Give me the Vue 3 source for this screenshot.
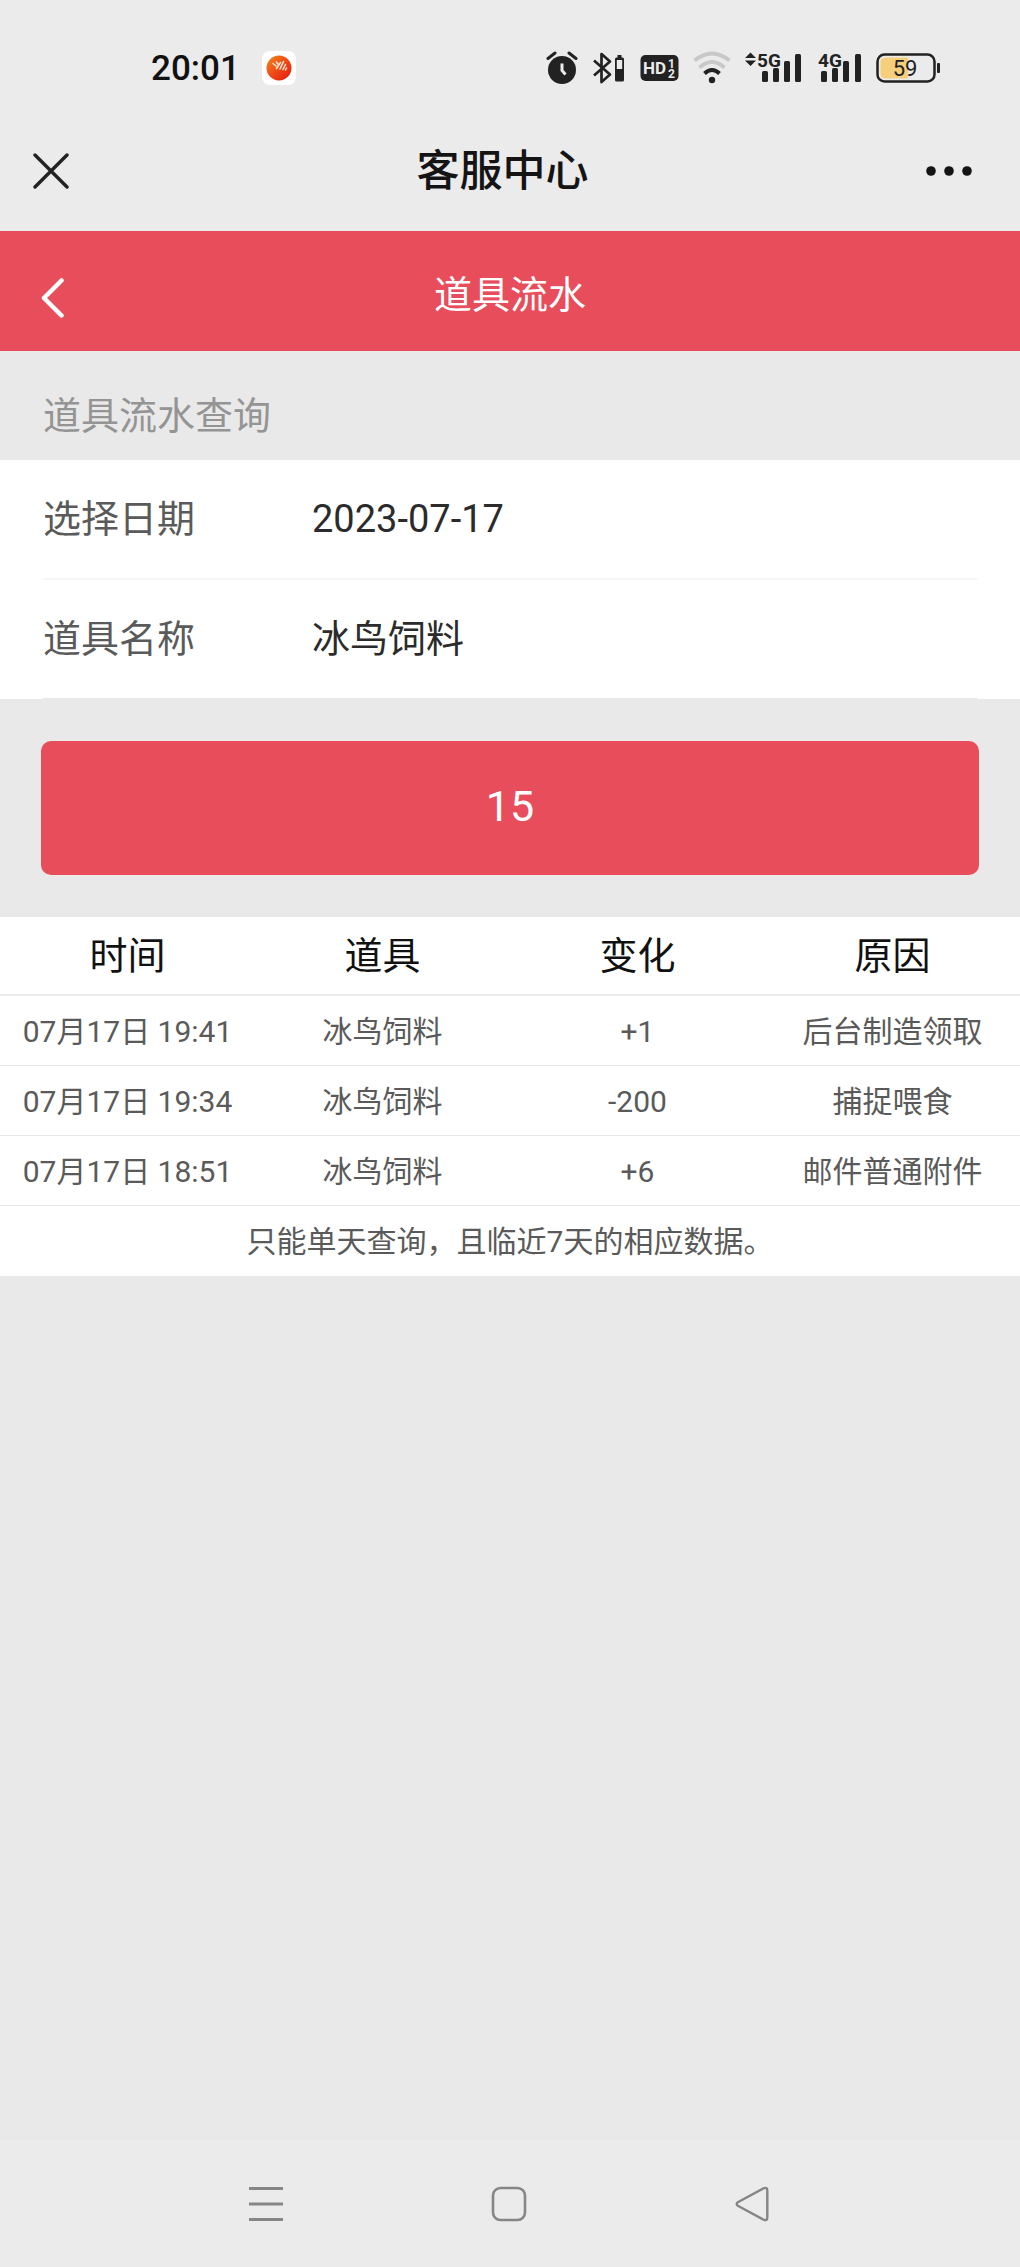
<script setup>
import { ref } from 'vue'

const date = ref('2023-07-17')
const item = ref('冰鸟饲料')
const columns = ['时间', '道具', '变化', '原因']
const records = [
  { time: '07月17日 19:41', item: '冰鸟饲料', change: '+1', reason: '后台制造领取' },
  { time: '07月17日 19:34', item: '冰鸟饲料', change: '-200', reason: '捕捉喂食' },
  { time: '07月17日 18:51', item: '冰鸟饲料', change: '+6', reason: '邮件普通附件' },
]
</script>

<template>
  <div class="screen">
    <header class="status">
      <div class="status-left">
        <time class="clock">20:01</time>
        <svg class="app" width="34" height="34" viewBox="0 0 34 34" aria-hidden="true">
          <defs>
            <linearGradient id="ball" x1="0" y1="0" x2="1" y2="1">
              <stop offset="0" stop-color="#f08a1c" />
              <stop offset="0.5" stop-color="#ee4a14" />
              <stop offset="1" stop-color="#e8140e" />
            </linearGradient>
          </defs>
          <rect width="34" height="34" rx="8" fill="#fff" />
          <circle cx="17" cy="17" r="12.500" fill="url(#ball)" />
          <path d="M11 12.500l3 2.500M14.500 11l2 3M14.500 17.500l4-6M18 18l3.500-7.500M21 18.500l2.500-5M23.500 19l1-2" stroke="#fbe3cf" stroke-width="1.600" stroke-linecap="round" fill="none" />
        </svg>
      </div>
      <div class="status-right">
        <svg width="32" height="34" viewBox="0 0 32 34" aria-hidden="true">
          <circle cx="16" cy="19" r="14" fill="#222" />
          <path d="M2 7.500l7-5.500M30 7.500L23 2" stroke="#222" stroke-width="3" stroke-linecap="round" />
          <path d="M16 12.500v7l3.500 4" stroke="#ebebeb" stroke-width="3" fill="none" />
        </svg>
        <svg class="bt" width="34" height="34" viewBox="0 0 34 34" aria-hidden="true">
          <path d="M2 9.500l16 14-8.500 7.500V3L18 10.500 2 24.500" stroke="#222" stroke-width="2.700" fill="none" stroke-linejoin="round" />
          <rect x="23" y="6.500" width="9" height="24" rx="1.500" fill="#222" />
          <rect x="25.500" y="4" width="4" height="3" fill="#222" />
          <rect x="24.800" y="9" width="5.400" height="9" fill="#ebebeb" />
        </svg>
        <svg class="hd" width="39" height="28" viewBox="0 0 39 28" aria-hidden="true">
          <rect x="0.500" y="1" width="38" height="26" rx="5" fill="#222" />
          <text x="3" y="20" class="glyph" font-size="17" fill="#ebebeb">HD</text>
          <text x="28" y="14" class="glyph" font-size="12" fill="#ebebeb">1</text>
          <text x="28" y="24" class="glyph" font-size="12" fill="#ebebeb">2</text>
        </svg>
        <svg class="wifi" width="38" height="34" viewBox="1 0 38 34" fill="none" aria-hidden="true">
          <path d="M2.500 9.500Q20-4.500 37.500 9.500" stroke="#c8c8c8" stroke-width="4" />
          <path d="M7.500 16.500Q20 5.500 32.500 16.500" stroke="#c8c8c8" stroke-width="4" />
          <path d="M12.500 22.500Q20 15.500 27.500 22.500" stroke="#222" stroke-width="4" />
          <circle cx="20" cy="29" r="3.200" fill="#222" />
        </svg>
        <svg class="sig5" width="58" height="50" viewBox="0 -8 58 50" fill="#222" aria-hidden="true">
          <path d="M5.500 1.500l5.500 5.500H0zM5.500 15L0 9.500h11z" />
          <text x="12" y="16" class="glyph" font-size="19">5G</text>
          <rect x="17" y="20" width="6" height="11" rx="1.500" />
          <rect x="28" y="17" width="6" height="14" rx="1.500" />
          <rect x="39" y="10" width="6" height="21" rx="1.500" />
          <rect x="50" y="3" width="6" height="28" rx="1.500" />
        </svg>
        <svg class="sig4" width="45" height="50" viewBox="0 -8 45 50" fill="#222" aria-hidden="true">
          <text x="1" y="16" class="glyph" font-size="19">4G</text>
          <rect x="4" y="20" width="6" height="11" rx="1.500" />
          <rect x="15" y="17" width="6" height="14" rx="1.500" />
          <rect x="26" y="10" width="6" height="21" rx="1.500" />
          <rect x="38" y="3" width="6" height="28" rx="1.500" />
        </svg>
        <svg class="battery" width="64" height="30" viewBox="0 0 64 30" aria-hidden="true">
          <rect x="1.500" y="1.500" width="57" height="27" rx="7" fill="none" stroke="#222" stroke-width="2.500" />
          <path d="M9 4.500h23v21H9a4.500 4.500 0 0 1-4.500-4.500V9A4.500 4.500 0 0 1 9 4.500z" fill="#f5cf7b" />
          <rect x="61" y="10" width="3" height="10" rx="1" fill="#222" />
          <text x="29" y="23" text-anchor="middle" font-size="22" fill="#222">59</text>
        </svg>
      </div>
    </header>

    <div class="titlebar">
      <button class="icon-btn close" type="button" aria-label="关闭">
        <svg width="36" height="36" viewBox="0 0 36 36"><path d="M2 2l32 32M34 2L2 34" stroke="#222" stroke-width="3.400" stroke-linecap="round" /></svg>
      </button>
      <h1>客服中心</h1>
      <button class="icon-btn more" type="button" aria-label="更多">
        <svg width="46" height="10" viewBox="0 0 46 10" fill="#141414"><circle cx="5" cy="5" r="4.800" /><circle cx="23" cy="5" r="4.800" /><circle cx="41" cy="5" r="4.800" /></svg>
      </button>
    </div>

    <div class="banner">
      <button class="icon-btn back" type="button" aria-label="返回">
        <svg width="24" height="40" viewBox="0 0 24 40"><path d="M20.500 2.500L3 20l17.500 17.500" fill="none" stroke="#fff" stroke-width="4.500" stroke-linecap="round" stroke-linejoin="round" /></svg>
      </button>
      <h2>道具流水</h2>
    </div>

    <main>
      <form @submit.prevent>
        <h3>道具流水查询</h3>
        <div class="fields">
          <div class="field">
            <label for="date">选择日期</label>
            <input id="date" v-model="date" type="text" readonly />
          </div>
          <div class="field">
            <label for="item">道具名称</label>
            <select id="item" v-model="item">
              <option>冰鸟饲料</option>
            </select>
          </div>
        </div>
        <div class="action">
          <button class="submit" type="submit">15</button>
        </div>
      </form>

      <table>
        <thead>
          <tr>
            <th v-for="c in columns" :key="c" scope="col">{{ c }}</th>
          </tr>
        </thead>
        <tbody>
          <tr v-for="r in records" :key="r.time">
            <td>{{ r.time }}</td>
            <td>{{ r.item }}</td>
            <td>{{ r.change }}</td>
            <td>{{ r.reason }}</td>
          </tr>
        </tbody>
        <tfoot>
          <tr>
            <td colspan="4">只能单天查询，且临近7天的相应数据。</td>
          </tr>
        </tfoot>
      </table>
    </main>

    <nav class="system">
      <button class="icon-btn" type="button" aria-label="最近任务">
        <svg width="34" height="36" viewBox="0 0 34 36"><path d="M0 2.500h34M0 18h34M0 33.500h34" stroke="#868686" stroke-width="3" /></svg>
      </button>
      <button class="icon-btn" type="button" aria-label="主屏幕">
        <svg width="36" height="36" viewBox="0 0 36 36"><rect x="2" y="2" width="32" height="32" rx="7.500" fill="none" stroke="#868686" stroke-width="2.600" /></svg>
      </button>
      <button class="icon-btn" type="button" aria-label="返回上一级">
        <svg width="34" height="36" viewBox="0 0 34 36"><path d="M2.800 16.200L28.500 2.300Q32.300.8 32.300 4.500v27Q32.300 35.200 28.500 33.700L2.800 19.800Q.6 18 2.800 16.200z" fill="none" stroke="#868686" stroke-width="2.400" stroke-linejoin="round" /></svg>
      </button>
    </nav>
  </div>
</template>

<style>
body {
  margin: 0;
  background: #e9e9e9;
}
</style>

<style scoped>
.screen {
  display: flex;
  flex-direction: column;
  min-height: 100vh;
  background: #e9e9e9;
  color: #5a5a5a;
  font-family: Roboto, "Noto Sans CJK SC", sans-serif;
  font-size: 38px;
}
h1, h2, h3 {
  margin: 0;
  font-size: 38px;
  font-weight: 400;
}
svg {
  display: block;
  flex: none;
}
.icon-btn {
  display: flex;
  padding: 0;
  border: 0;
  background: none;
}
.status {
  display: flex;
  align-items: center;
  justify-content: space-between;
  height: 86px;
  padding: 25px 80px 0 151px;
  background: #ebebeb;
}
.status-left,
.status-right {
  display: flex;
  align-items: center;
}
.status-left {
  gap: 22px;
}
.clock {
  color: #111;
  font-size: 35px;
  font-weight: 500;
}
.status-right {
  gap: 14px;
}
.glyph {
  font-weight: 700;
}
.titlebar {
  display: grid;
  grid-template-columns: 1fr auto 1fr;
  align-items: center;
  height: 120px;
  padding: 0 48px 0 33px;
  background: #ebebeb;
}
.titlebar h1 {
  color: #141414;
  font-size: 43px;
  font-weight: 500;
  line-height: 58px;
}
.more {
  justify-self: end;
}
.banner {
  display: grid;
  grid-template-columns: 1fr auto 1fr;
  align-items: center;
  height: 120px;
  padding: 0 41px;
  background: #e84d5b;
}
.banner h2 {
  color: #fff;
}
.back {
  padding-top: 14px;
}
h3 {
  padding: 36px 43px 15px;
  color: #949494;
  line-height: 58px;
}
.fields {
  padding: 0 43px;
  background: #fff;
}
.field {
  display: flex;
  align-items: center;
  height: 118px;
  border-bottom: 2px solid #f4f4f4;
}
.field:last-child {
  border-bottom: 1px solid #e6e6e6;
}
.field label {
  width: 269px;
  line-height: 58px;
}
.field input,
.field select {
  flex: 1;
  min-width: 0;
  height: 58px;
  padding: 0;
  border: 0;
  outline: 0;
  appearance: none;
  background: none;
  color: #2b2b2b;
  font: inherit;
}
.action {
  padding: 42px 41px;
}
.submit {
  display: block;
  width: 100%;
  height: 134px;
  padding: 0 0 4px;
  border: 0;
  border-radius: 10px;
  background: #e84d5b;
  color: #fff;
  font-family: inherit;
  font-size: 43px;
}
table {
  width: 100%;
  table-layout: fixed;
  border-spacing: 0;
  background: #fff;
  text-align: center;
}
th {
  height: 77px;
  padding: 0;
  border-bottom: 2px solid #ececec;
  color: #111;
  font-weight: 400;
  line-height: 58px;
}
td {
  height: 66px;
  padding: 3px 0 0;
  border-bottom: 1px solid #e6e6e6;
  font-size: 30px;
  line-height: 40px;
}
tfoot td {
  border-bottom-color: transparent;
}
.system {
  display: grid;
  grid-template-columns: repeat(3, 1fr);
  align-items: center;
  justify-items: center;
  height: 127px;
  margin-top: auto;
  padding: 0 146px 0 144px;
  border-top: 1px solid #e8e8e8;
  background: #ebebeb;
}
</style>
